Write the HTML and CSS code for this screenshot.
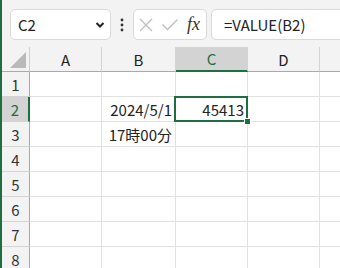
FILE: index.html
```html
<!DOCTYPE html>
<html>
<head>
<meta charset="utf-8">
<link rel="stylesheet" href="styles.css">
</head>
<body>
<div class="app">
  <div class="toolbar">
    <div class="namebox">
      <span class="name">C2</span>
      <svg class="chev" width="10" height="8" viewBox="0 0 10 8"><polyline points="1.5,2 5,5.5 8.5,2" fill="none" stroke="#222" stroke-width="2"/></svg>
    </div>
    <svg class="kebab" width="6" height="16" viewBox="0 0 6 16"><circle cx="3" cy="3" r="1.4" fill="#333"/><circle cx="3" cy="8" r="1.4" fill="#333"/><circle cx="3" cy="13" r="1.4" fill="#333"/></svg>
    <div class="fxbox">
      <svg class="ic" width="16" height="16" viewBox="0 0 16 16"><path d="M2 2 L14 14 M14 2 L2 14" stroke="#bdbdbd" stroke-width="1.3" fill="none"/></svg>
      <svg class="ic" width="18" height="16" viewBox="0 0 18 16"><polyline points="1.5,7.5 6.5,12.5 16.5,2.5" stroke="#bdbdbd" stroke-width="1.3" fill="none"/></svg>
      <span class="fx">fx</span>
    </div>
    <div class="formula">=VALUE(B2)</div>
  </div>
  <div class="grid">
    <div class="corner"><svg width="18" height="17" viewBox="0 0 18 17"><polygon points="17,0 17,16 1,16" fill="#b9b9b9"/></svg></div>
    <div class="ch">A</div>
    <div class="ch wb">B</div>
    <div class="ch sel">C</div>
    <div class="ch">D</div>
    <div class="ch last"></div>

    <div class="rh">1</div><div class="c"></div><div class="c"></div><div class="c"></div><div class="c"></div><div class="c last"></div>
    <div class="rh sel">2</div><div class="c"></div><div class="c num">2024/5/1</div><div class="c num active">45413<span class="handle"></span></div><div class="c"></div><div class="c last"></div>
    <div class="rh">3</div><div class="c"></div><div class="c num">17時00分</div><div class="c"></div><div class="c"></div><div class="c last"></div>
    <div class="rh">4</div><div class="c"></div><div class="c"></div><div class="c"></div><div class="c"></div><div class="c last"></div>
    <div class="rh">5</div><div class="c"></div><div class="c"></div><div class="c"></div><div class="c"></div><div class="c last"></div>
    <div class="rh">6</div><div class="c"></div><div class="c"></div><div class="c"></div><div class="c"></div><div class="c last"></div>
    <div class="rh">7</div><div class="c"></div><div class="c"></div><div class="c"></div><div class="c"></div><div class="c last"></div>
    <div class="rh">8</div><div class="c"></div><div class="c"></div><div class="c"></div><div class="c"></div><div class="c last"></div>
  </div>
</div>
</body>
</html>
```

FILE: styles.css
```css
html, body {
  margin: 0;
  padding: 0;
  background: #ffffff;
}
.app {
  width: 340px;
  height: 268px;
  box-sizing: border-box;
  border-left: 2px solid #1e6e42;
  background: #f3f3f3;
  overflow: hidden;
  display: flex;
  flex-direction: column;
  font-family: "Noto Sans CJK JP", "Noto Sans", sans-serif;
  color: #222;
}
.toolbar {
  height: 47px;
  flex: none;
  display: flex;
  align-items: flex-start;
  padding: 9px 0 0 8px;
  box-sizing: border-box;
}
.namebox {
  width: 101px;
  height: 31px;
  flex: none;
  box-sizing: border-box;
  background: #fff;
  border: 1px solid #d9d9d9;
  border-radius: 5px;
  display: flex;
  align-items: center;
  justify-content: space-between;
  padding: 0 5px 0 7px;
}
.name {
  font-size: 15px;
  line-height: 1;
}
.chev {
  display: block;
}
.kebab {
  display: block;
  margin: 8px 0 0 8px;
  flex: none;
}
.fxbox {
  margin-left: 8px;
  width: 74px;
  height: 31px;
  flex: none;
  box-sizing: border-box;
  background: #fff;
  border: 1px solid #d9d9d9;
  border-radius: 5px;
  display: flex;
  align-items: center;
  padding: 0 0 0 4px;
  gap: 7px;
}
.ic {
  display: block;
  flex: none;
}
.fx {
  font-family: "Liberation Serif", serif;
  font-style: italic;
  font-size: 18px;
  color: #333;
  margin-left: 1px;
}
.formula {
  margin-left: 4px;
  flex: none;
  width: 160px;
  height: 31px;
  box-sizing: border-box;
  background: #fff;
  border: 1px solid #d9d9d9;
  border-radius: 5px;
  padding-left: 12px;
  font-size: 15px;
  line-height: 29px;
  color: #222;
}
.grid {
  display: grid;
  grid-template-columns: 28px 72px 74px 72px 72px 1fr;
  grid-auto-rows: 25px;
  background: #fff;
  font-size: 15px;
}
.grid > div {
  box-sizing: border-box;
  border-right: 1px solid #e1e1e1;
  border-bottom: 1px solid #e1e1e1;
}
.grid > .corner {
  background: #f3f3f3;
  border-right: 1px solid #cfcfcf;
  border-bottom: 1px solid #a9a9a9;
  display: flex;
  align-items: flex-end;
  justify-content: flex-end;
  padding: 0 2px 2px 0;
}
.corner svg {
  display: block;
}
.grid > .ch {
  background: #f3f3f3;
  border-right: 1px solid #d4d4d4;
  border-bottom: 1px solid #a9a9a9;
  display: flex;
  align-items: center;
  justify-content: center;
  color: #222;
  font-size: 15px;
}
.grid > .ch.sel {
  background: #d3d3d3;
  color: #1e6e42;
  border-bottom: 2px solid #1e6e42;
}
.grid > .rh {
  background: #f3f3f3;
  border-right: 1px solid #a9a9a9;
  border-bottom: 1px solid #d4d4d4;
  display: flex;
  align-items: center;
  justify-content: center;
  color: #333;
  font-size: 15px;
}
.grid > .rh.sel {
  background: #d3d3d3;
  color: #1e6e42;
  border-right: 2px solid #1e6e42;
}
.grid > .last {
  border-right: none;
}
.num {
  display: flex;
  align-items: center;
  justify-content: flex-end;
  padding-right: 3px;
  white-space: nowrap;
}
.active {
  position: relative;
}
.active::after {
  content: "";
  position: absolute;
  left: -2px;
  top: -1px;
  right: -1px;
  bottom: -1px;
  border: 2px solid #1e6e42;
}
.handle {
  position: absolute;
  right: -4px;
  bottom: -4px;
  width: 5px;
  height: 5px;
  background: #1e6e42;
  border: 1px solid #fff;
  z-index: 2;
}
```
